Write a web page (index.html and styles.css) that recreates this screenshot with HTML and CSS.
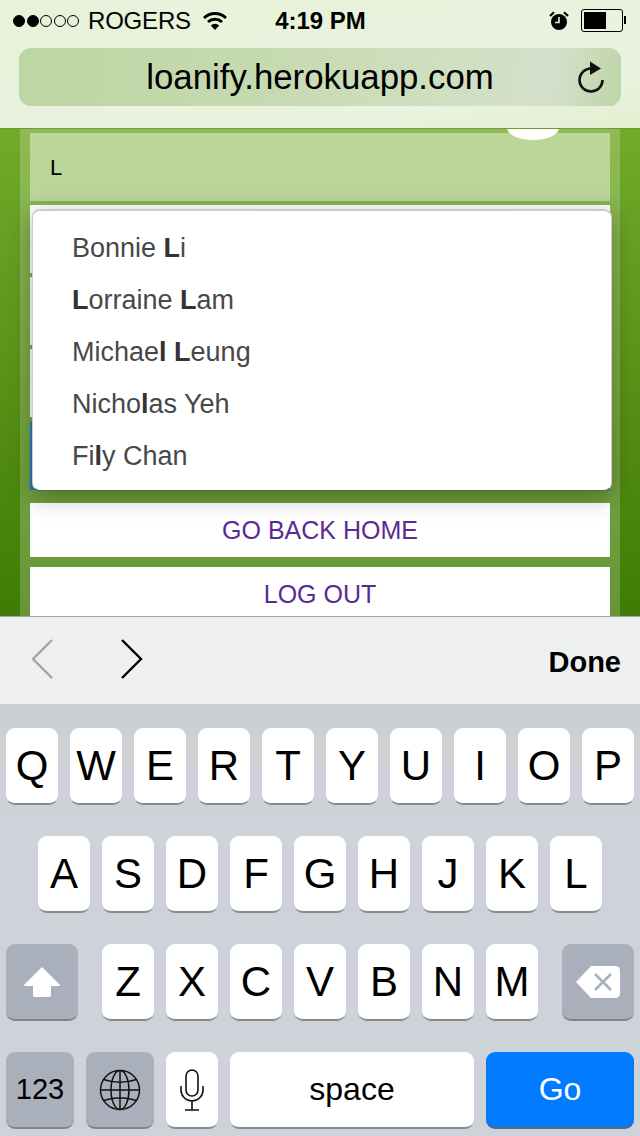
FILE: index.html
```html
<!DOCTYPE html>
<html lang="en">
<head>
  <meta charset="UTF-8">
  <meta name="viewport" content="width=device-width, initial-scale=1.0">
  <title>Loanify</title>
  <link rel="stylesheet" href="styles.css">
</head>
<body>

  <!-- Safari top bar -->
  <header class="browser-bar">
    <div class="status-bar">
      <div class="status-left">
        <span class="signal">
          <i class="dot on"></i><i class="dot on"></i><i class="dot"></i><i class="dot"></i><i class="dot"></i>
        </span>
        <span class="carrier">ROGERS</span>
        <svg class="wifi" width="24" height="20" viewBox="0 0 24 20">
          <path d="M1 7 A16 16 0 0 1 23 7" fill="none" stroke="#000" stroke-width="3"/>
          <path d="M5 11 A10.5 10.5 0 0 1 19 11" fill="none" stroke="#000" stroke-width="3"/>
          <path d="M12 19 L7.8 14.4 A6 6 0 0 1 16.2 14.4 Z" fill="#000"/>
        </svg>
      </div>
      <span class="time">4:19 PM</span>
      <div class="status-right">
        <svg class="alarm" width="20" height="20" viewBox="0 0 20 20">
          <circle cx="10" cy="11" r="8" fill="#000"/>
          <path d="M10 6 V11.5 H6" fill="none" stroke="#eaf2dc" stroke-width="1.6"/>
          <path d="M1 5 L5 1.2 M19 5 L15 1.2" stroke="#000" stroke-width="2.2"/>
        </svg>
        <div class="battery"><div class="battery-level"></div></div>
      </div>
    </div>
    <div class="url-bar">
      <span class="url">loanify.herokuapp.com</span>
      <svg class="reload" width="30" height="32" viewBox="0 0 30 32">
        <path d="M15 7.5 A11.5 11.5 0 1 0 26.5 19" fill="none" stroke="#111" stroke-width="2.6"/>
        <path d="M14 0.5 L25 7.5 L14 14 Z" fill="#111"/>
      </svg>
    </div>
  </header>

  <main class="content">
    <div class="blob"></div>
    <div class="panel">
      <div class="name-input">L</div>
      <div class="field"></div>
      <div class="field"></div>
      <div class="field"></div>
      <div class="submit-btn"></div>
      <a class="link-btn first">GO BACK HOME</a>
      <a class="link-btn">LOG OUT</a>
    </div>

    <ul class="typeahead">
      <li>Bonnie <strong>L</strong>i</li>
      <li><strong>L</strong>orraine <strong>L</strong>am</li>
      <li>Michae<strong>l</strong> <strong>L</strong>eung</li>
      <li>Nicho<strong>l</strong>as Yeh</li>
      <li>Fi<strong>l</strong>y Chan</li>
    </ul>
  </main>

  <!-- form accessory -->
  <div class="form-toolbar">
    <svg class="chevron" width="24" height="42" viewBox="0 0 24 42">
      <path d="M22 2 L3 21 L22 40" fill="none" stroke="#a3a5a5" stroke-width="2.4"/>
    </svg>
    <svg class="chevron next" width="24" height="42" viewBox="0 0 24 42">
      <path d="M2 2 L21 21 L2 40" fill="none" stroke="#000" stroke-width="2.4"/>
    </svg>
    <span class="done">Done</span>
  </div>

  <div class="keyboard">
    <div class="key-row">
      <div class="key">Q</div><div class="key">W</div><div class="key">E</div><div class="key">R</div><div class="key">T</div>
      <div class="key">Y</div><div class="key">U</div><div class="key">I</div><div class="key">O</div><div class="key">P</div>
    </div>
    <div class="key-row">
      <div class="key">A</div><div class="key">S</div><div class="key">D</div><div class="key">F</div><div class="key">G</div>
      <div class="key">H</div><div class="key">J</div><div class="key">K</div><div class="key">L</div>
    </div>
    <div class="key-row">
      <div class="key gray wide shift-key">
        <svg width="38" height="32" viewBox="0 0 38 32">
          <path d="M19 1 L37 19 Q37.500 20 36 20 H28 V29 Q28 31 26 31 H12 Q10 31 10 29 V20 H2 Q0.500 20 1 19 Z" fill="#fff"/>
        </svg>
      </div>
      <div class="key">Z</div><div class="key">X</div><div class="key">C</div><div class="key">V</div><div class="key">B</div><div class="key">N</div><div class="key">M</div>
      <div class="key gray wide delete-key">
        <svg width="44" height="32" viewBox="0 0 44 32">
          <path d="M15 0 H39 Q44 0 44 5 V27 Q44 32 39 32 H15 L0 16 Z" fill="#fff"/>
          <path d="M19 8 L35 24 M35 8 L19 24" stroke="#a9b0bb" stroke-width="2.6"/>
        </svg>
      </div>
    </div>
    <div class="key-row">
      <div class="key gray fn digits">123</div>
      <div class="key gray fn">
        <svg width="42" height="42" viewBox="0 0 42 42" fill="none" stroke="#111" stroke-width="1.5">
          <circle cx="21" cy="21" r="19.500"/>
          <ellipse cx="21" cy="21" rx="9" ry="19.500"/>
          <path d="M21 1.500 V40.500 M1.500 21 H40.500 M4.500 10.500 Q21 16 37.500 10.500 M4.500 31.500 Q21 26 37.500 31.500"/>
        </svg>
      </div>
      <div class="key">
        <svg width="24" height="42" viewBox="0 0 24 42" fill="none" stroke="#111" stroke-width="1.600">
          <rect x="6" y="1" width="12" height="26" rx="6"/>
          <path d="M1 17 V21 A11 11 0 0 0 23 21 V17 M12 32 V41 M5 41 H19"/>
        </svg>
      </div>
      <div class="key space">space</div>
      <div class="key go">Go</div>
    </div>
  </div>

</body>
</html>
```

FILE: styles.css
```css
* {
  box-sizing: border-box;
}

body {
  font-family: 'Liberation Sans', Arial, sans-serif;
  margin: 0;
  width: 640px;
  height: 1136px;
  overflow: hidden;
  display: flex;
  flex-direction: column;
  background-color: #cdd1d8;
  color: #000;
}

.browser-bar {
  height: 129px;
  flex: none;
  padding: 0 19px;
  background: linear-gradient(170deg, #e8f2d9 0%, #e9f2dc 40%, #eaf3df 75%, #e3eed0 100%);
  border-bottom: 1px solid #6e9a3c;
}

.status-bar {
  height: 48px;
  margin: 0 -2px 0 -6px;
  padding-bottom: 7px;
  display: flex;
  align-items: center;
}

.status-left,
.status-right {
  flex: 1;
  display: flex;
  align-items: center;
}

.status-right {
  justify-content: flex-end;
}

.signal {
  display: flex;
  gap: 1.500px;
}

.dot {
  width: 12px;
  height: 12px;
  border-radius: 50%;
  border: 1px solid #000;
}

.dot.on {
  background-color: #000;
}

.carrier {
  font-size: 24px;
  margin-left: 9px;
  letter-spacing: -0.2px;
}

.wifi {
  margin-left: 12px;
}

.time {
  font-size: 24px;
  font-weight: bold;
  margin-left: 5px;
}

.alarm {
  margin-right: 12px;
}

.battery {
  width: 42px;
  height: 23px;
  border: 1px solid #000;
  border-radius: 3px;
  padding: 2px;
  position: relative;
}

.battery::after {
  content: "";
  position: absolute;
  right: -4px;
  top: 6px;
  width: 2px;
  height: 8px;
  background-color: #000;
}

.battery-level {
  width: 22px;
  height: 100%;
  background-color: #000;
}

.url-bar {
  height: 58px;
  border-radius: 12px;
  background: linear-gradient(100deg, #bcd6a3 0%, #c6dab0 40%, #cfdfc0 70%, #d5e0cb 88%, #bdd5a6 100%);
  display: flex;
  align-items: center;
  justify-content: center;
  position: relative;
}

.url {
  font-size: 34.800px;
  margin-top: -1px;
}

.reload {
  position: absolute;
  right: 15px;
  top: 13px;
}

.content {
  height: 487px;
  flex: none;
  position: relative;
  overflow: hidden;
  background: linear-gradient(#72aa2a, #3f7c05);
}

.panel {
  margin: 0 20px;
  height: 100%;
  padding: 4px 10px 0;
  background-color: rgba(255, 255, 255, 0.2);
  display: flex;
  flex-direction: column;
}

.blob {
  position: absolute;
  left: 507px;
  top: -13px;
  width: 52px;
  height: 24px;
  border-radius: 50%;
  background-color: #fff;
  z-index: 1;
}

.name-input {
  height: 68px;
  flex: none;
  padding-left: 20px;
  background-color: rgba(255, 255, 255, 0.42);
  font-size: 22px;
  line-height: 70px;
}

.field {
  height: 68px;
  flex: none;
  margin-top: 4px;
  background-color: #fff;
}

.submit-btn {
  height: 68px;
  flex: none;
  margin-top: 5px;
  margin-bottom: 13px;
  background-color: #2a78c0;
}

.link-btn {
  height: 54px;
  flex: none;
  margin-top: 10px;
  background-color: #fff;
  color: #5a2a94;
  font-size: 25px;
  text-align: center;
  line-height: 54px;
}

.link-btn.first {
  margin-top: 0;
}

.typeahead {
  position: absolute;
  left: 32px;
  top: 80px;
  width: 580px;
  height: 282px;
  margin: 0;
  padding: 12px 0 0;
  list-style: none;
  background-color: #fff;
  border: 1px solid rgba(0, 0, 0, 0.2);
  border-top-width: 2px;
  border-bottom-color: #4c7030;
  border-radius: 8px;
  box-shadow: 0 6px 24px rgba(0, 0, 0, 0.3);
  z-index: 2;
}

.typeahead li {
  height: 52px;
  padding-left: 39px;
  font-size: 27px;
  line-height: 50px;
  color: #484848;
}

.typeahead strong {
  color: #333;
}

.form-toolbar {
  height: 88px;
  flex: none;
  padding: 0 19px 4px 30px;
  display: flex;
  align-items: center;
  background-color: #eef0ef;
  border-top: 1px solid #a2a5a5;
}

.chevron.next {
  margin-left: 66px;
}

.done {
  margin-left: auto;
  font-size: 29px;
  font-weight: bold;
  padding-top: 8px;
}

.keyboard {
  flex: 1;
  padding-top: 24px;
  background: linear-gradient(#cbd0d4, #ced2d9 120px);
  display: flex;
  flex-direction: column;
  gap: 31px;
}

.key-row {
  display: flex;
  justify-content: center;
  gap: 12px;
}

.key {
  width: 52px;
  height: 77px;
  flex: none;
  display: flex;
  align-items: center;
  justify-content: center;
  background-color: #fff;
  border-bottom: 2px solid #87898d;
  border-radius: 9px;
  font-size: 42px;
}

.key.gray {
  background-color: #a9b0bb;
  border-bottom-color: #7f838a;
}

.key.wide {
  width: 72px;
}

.key.fn {
  width: 68px;
}

.key.digits {
  font-size: 29px;
}

.key.space {
  width: 244px;
  font-size: 32px;
}

.key.go {
  width: 148px;
  background-color: #007aff;
  border-bottom-color: #5f6a78;
  color: #fff;
  font-size: 32px;
}

.shift-key {
  margin-right: 12px;
}

.delete-key {
  margin-left: 12px;
}
```
